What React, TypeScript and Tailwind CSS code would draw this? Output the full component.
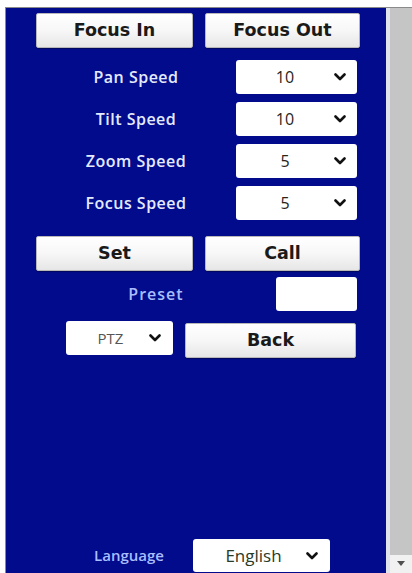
import React from "react";

const font = { fontFamily: '"Open Sans", "Noto Sans", sans-serif' };
const btnFont = { fontFamily: '"DejaVu Sans", "Open Sans", sans-serif' };

function Chevron() {
  return (
    <svg width="12" height="8" viewBox="0 0 12 8" className="shrink-0">
      <path d="M1.5 1.5 L6 6 L10.5 1.5" fill="none" stroke="#111" strokeWidth="2.6" strokeLinecap="round" strokeLinejoin="round" />
    </svg>
  );
}

function Btn({ label, w, extra = "" }: { label: string; w: string; extra?: string }) {
  return (
    <div
      style={btnFont}
      className={`${w} ${extra} h-[35px] flex items-center justify-center rounded-[2px] border border-[#b8b8b8] bg-gradient-to-b from-white via-[#f7f7f7] to-[#e6e6e6] shadow-[0_1px_1px_rgba(0,0,0,0.35)] text-[17.5px] font-bold text-[#1a1a1a]`}
    >
      {label}
    </div>
  );
}

function Select({ value, w, h = "h-[34px]", textClass = "text-[16px] text-[#2a2418]", pad = "pr-[11px]" }: { value: string; w: string; h?: string; textClass?: string; pad?: string }) {
  return (
    <div className={`${w} ${h} bg-white rounded-[3px] flex items-center ${pad}`}>
      <span className={`flex-1 text-center ${textClass}`}>{value}</span>
      <Chevron />
    </div>
  );
}

function SpeedRow({ label, value }: { label: string; value: string }) {
  return (
    <div className="flex items-center h-[34px]">
      <div className="w-[200px] text-center text-[16px] font-semibold text-[#e4eaff] tracking-[0.5px]">{label}</div>
      <Select value={value} w="w-[121px]" />
    </div>
  );
}

export default function App() {
  return (
    <div className="w-[412px] h-[573px] bg-white pt-[7px] pl-[5px] flex overflow-hidden" style={font}>
      <div className="flex flex-1 border-l border-t border-[#8a8a8a]">
        <div className="w-[380px] bg-[#020b8c] flex flex-col pl-[30px] pt-[5px]">
          <div className="flex gap-[12px]">
            <Btn label="Focus In" w="w-[157px]" />
            <Btn label="Focus Out" w="w-[155px]" />
          </div>

          <div className="flex flex-col gap-[8px] mt-[12px]">
            <SpeedRow label="Pan Speed" value="10" />
            <SpeedRow label="Tilt Speed" value="10" />
            <SpeedRow label="Zoom Speed" value="5" />
            <SpeedRow label="Focus Speed" value="5" />
          </div>

          <div className="flex gap-[12px] mt-[16px]">
            <Btn label="Set" w="w-[157px]" />
            <Btn label="Call" w="w-[155px]" />
          </div>

          <div className="flex items-center mt-[6px] h-[34px]">
            <div className="w-[240px] text-center text-[16px] font-semibold text-[#a9beff] tracking-[1px]">Preset</div>
            <div className="w-[81px] h-[34px] bg-white rounded-[3px]" />
          </div>

          <div className="flex items-start gap-[12px] mt-[10px] ml-[30px]">
            <Select value="PTZ" w="w-[107px]" textClass="text-[15px] text-[#555]" pad="pr-[12px] pl-[6px]" />
            <Btn label="Back" w="w-[171px]" extra="mt-[2px]" />
          </div>

          <div className="mt-auto flex items-center ml-[29px] mb-[1px]">
            <div className="w-[128px] text-center text-[15px] font-semibold text-[#a9beff]">Language</div>
            <Select value="English" w="w-[137px]" h="h-[33px]" textClass="text-[17px] text-[#2a3a28]" pad="pr-[12px] pl-[8px]" />
          </div>
        </div>

        <div className="flex-1 flex">
          <div className="w-[4px] bg-[#dfe3ee]" />
          <div className="flex-1 flex flex-col">
            <div className="flex-1 bg-[#c5c5c5]" />
            <div className="h-[18px] bg-[#f1f1f1] flex items-start justify-center pt-[6px]">
              <svg width="8" height="5" viewBox="0 0 8 5">
                <path d="M0 0 L8 0 L4 5 Z" fill="#505050" />
              </svg>
            </div>
          </div>
        </div>
      </div>
    </div>
  );
}
